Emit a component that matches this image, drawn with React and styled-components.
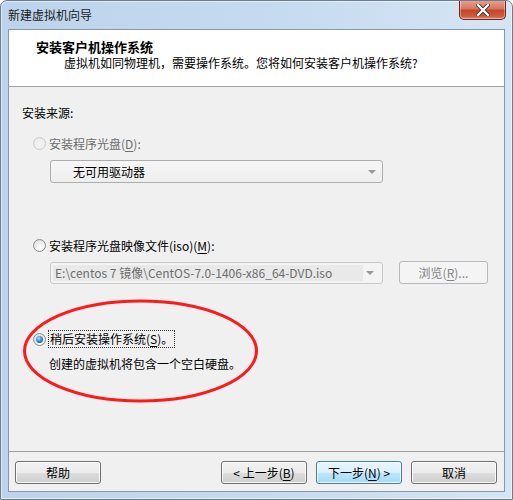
import React from "react";
import styled, { createGlobalStyle } from "styled-components";

const Global = createGlobalStyle`
  html, body { margin: 0; padding: 0; background: #ffffff; }
  body { font-family: "Noto Sans CJK SC", "Noto Sans", sans-serif; font-size: 12px; color: #000; }
  * { box-sizing: border-box; }
`;

const Window = styled.div`
  position: relative;
  width: 513px;
  height: 500px;
  border: 1px solid #6b7d92;
  border-radius: 7px 7px 0 0;
  background: linear-gradient(90deg, #bcd3eb 0%, #c6dbef 55%, #d6e5f4 100%);
  box-shadow: inset 0 0 0 1px rgba(255,255,255,0.55);
  display: flex;
  flex-direction: column;
  overflow: hidden;
`;

const TitleBar = styled.div`
  height: 28px;
  display: flex;
  align-items: center;
  padding: 0 0 0 7px;
  position: relative;
`;

const Title = styled.div`
  font-size: 12px;
  color: #1a1a1a;
  line-height: 16px;
  margin-top: -1px;
`;

const CloseBtn = styled.div`
  position: absolute;
  top: -1px;
  right: 6px;
  width: 47px;
  height: 20px;
  border: 1px solid #6e2a22;
  border-top: none;
  border-radius: 0 0 5px 5px;
  background: linear-gradient(180deg, #e8a493 0%, #d7765f 45%, #c3452c 55%, #cf5b3e 85%, #e08a6b 100%);
  box-shadow: inset 0 0 0 1px rgba(255,255,255,0.35);
  display: flex;
  align-items: center;
  justify-content: center;
`;

const Client = styled.div`
  margin: 0 7px 7px 7px;
  flex: 1;
  border: 1px solid #8597ad;
  background: #f0f0f0;
  display: flex;
  flex-direction: column;
`;

const Header = styled.div`
  height: 57px;
  background: #ffffff;
  border-bottom: 1px solid #a0a0a0;
  padding: 9px 0 0 27px;
  display: flex;
  flex-direction: column;
`;

const HeaderTitle = styled.div`
  font-size: 13px;
  font-weight: bold;
  line-height: 16px;
`;

const HeaderSub = styled.div`
  font-size: 12px;
  line-height: 16px;
  padding-left: 28px;
`;

const Body = styled.div`
  flex: 1;
  display: flex;
  flex-direction: column;
  padding: 18px 0 0 13px;
`;

const Label = styled.div`
  line-height: 16px;
  height: 16px;
  margin-top: ${(p) => p.$mt || 0}px;
  padding-left: ${(p) => p.$indent || 0}px;
  color: ${(p) => (p.$disabled ? "#6d6d6d" : "#000")};
`;

const RadioRow = styled.div`
  display: flex;
  align-items: center;
  height: 16px;
  margin-top: ${(p) => p.$mt || 0}px;
  padding-left: 11px;
  color: ${(p) => (p.$disabled ? "#6d6d6d" : "#000")};
`;

const RadioDot = styled.span`
  width: 13px;
  height: 13px;
  border-radius: 50%;
  margin-right: 3px;
  flex: none;
  display: flex;
  align-items: center;
  justify-content: center;
  border: 1px solid ${(p) => (p.$disabled ? "#cbcbcb" : "#8b8c8c")};
  background: ${(p) =>
    p.$disabled
      ? "radial-gradient(circle at 50% 60%, #f5f5f5 0%, #e6e6e6 100%)"
      : "radial-gradient(circle at 60% 70%, #ffffff 0%, #e3e3e3 70%, #cfcfcf 100%)"};
  &::after {
    content: "";
    display: ${(p) => (p.$checked ? "block" : "none")};
    width: 7px;
    height: 7px;
    border-radius: 50%;
    background: radial-gradient(circle at 40% 35%, #b9e4ff 0%, #3a8fd3 45%, #0d4a8c 100%);
  }
`;

const Focus = styled.span`
  outline: 1px dotted #333;
  outline-offset: 0px;
  padding: 0 1px;
  line-height: 16px;
`;

const U = styled.span`
  text-decoration: underline;
  text-underline-offset: 2px;
`;

const Combo = styled.div`
  margin-top: ${(p) => p.$mt || 0}px;
  margin-left: 28px;
  width: 333px;
  height: ${(p) => p.$h || 23}px;
  border: 1px solid ${(p) => (p.$edit ? "#c9c9c9" : "#adadad")};
  border-radius: 3px;
  background: ${(p) => (p.$edit ? "#f4f4f4" : "linear-gradient(180deg, #f6f6f6 0%, #eeeeee 100%)")};
  display: flex;
  align-items: center;
  padding: ${(p) => (p.$edit ? "2px" : "0 0 0 22px")};
`;

const ComboText = styled.div`
  flex: 1;
  line-height: 16px;
  color: #000;
`;

const EditField = styled.div`
  width: 310px;
  height: 100%;
  background: #e9e9e9;
  color: #6d6d6d;
  padding-left: 2px;
  display: flex;
  align-items: center;
  white-space: nowrap;
  overflow: hidden;
`;

const Arrow = styled.div`
  width: 0;
  height: 0;
  margin: 0 6px 0 auto;
  border-left: 4px solid transparent;
  border-right: 4px solid transparent;
  border-top: 4px solid #999999;
`;

const ComboRow = styled.div`
  display: flex;
  align-items: center;
  margin-top: ${(p) => p.$mt || 0}px;
`;

const Footer = styled.div`
  height: 40px;
  border-top: 1px solid #a0a0a0;
  display: flex;
  align-items: flex-start;
  padding: 9px 7px 0 6px;
`;

const Button = styled.div`
  width: ${(p) => p.$w || 86}px;
  height: 23px;
  border-radius: 3px;
  display: flex;
  align-items: center;
  justify-content: center;
  line-height: 16px;
  margin-left: ${(p) => p.$ml || 0}px;
  border: 1px solid ${(p) => (p.$disabled ? "#b5b9bc" : p.$def ? "#3c7fb1" : "#707070")};
  color: ${(p) => (p.$disabled ? "#838383" : "#000")};
  background: ${(p) =>
    p.$disabled
      ? "#f4f4f4"
      : p.$def
      ? "linear-gradient(180deg, #eaf6fd 0%, #d9f0fc 50%, #bee6fd 51%, #a7d9f5 100%)"
      : "linear-gradient(180deg, #f2f2f2 0%, #ebebeb 50%, #dddddd 51%, #cfcfcf 100%)"};
  box-shadow: ${(p) => (p.$disabled ? "none" : "inset 0 0 0 1px rgba(255,255,255,0.85)")};
`;

const Spacer = styled.div`
  flex: 1;
`;

const Overlay = styled.svg`
  position: absolute;
  left: 0;
  top: 0;
  pointer-events: none;
`;

export default function App() {
  return (
    <>
      <Global />
      <Window>
        <TitleBar>
          <Title>新建虚拟机向导</Title>
          <CloseBtn>
            <svg width="14" height="12" viewBox="0 0 14 12">
              <path d="M2 1 L12 11 M12 1 L2 11" stroke="#3a3a3a" strokeWidth="4" strokeLinecap="square" />
              <path d="M2 1 L12 11 M12 1 L2 11" stroke="#ffffff" strokeWidth="2.2" strokeLinecap="square" />
            </svg>
          </CloseBtn>
        </TitleBar>
        <Client>
          <Header>
            <HeaderTitle>安装客户机操作系统</HeaderTitle>
            <HeaderSub>虚拟机如同物理机，需要操作系统。您将如何安装客户机操作系统?</HeaderSub>
          </Header>
          <Body>
            <Label>安装来源:</Label>
            <RadioRow $mt={14} $disabled>
              <RadioDot $disabled />
              <span>安装程序光盘(<U>D</U>):</span>
            </RadioRow>
            <Combo $mt={9}>
              <ComboText>无可用驱动器</ComboText>
              <Arrow />
            </Combo>
            <RadioRow $mt={54}>
              <RadioDot />
              <span>安装程序光盘映像文件(iso)(<U>M</U>):</span>
            </RadioRow>
            <ComboRow $mt={8}>
              <Combo $edit $h={22}>
                <EditField>E:\centos 7 镜像\CentOS-7.0-1406-x86_64-DVD.iso</EditField>
                <Arrow />
              </Combo>
              <Button $disabled $ml={16} $w={89}>浏览(<U>R</U>)...</Button>
            </ComboRow>
            <RadioRow $mt={47}>
              <RadioDot $checked />
              <Focus>稍后安装操作系统(<U>S</U>)。</Focus>
            </RadioRow>
            <Label $mt={9} $indent={27}>创建的虚拟机将包含一个空白硬盘。</Label>
          </Body>
          <Footer>
            <Button>帮助</Button>
            <Spacer />
            <Button>&lt; 上一步(<U>B</U>)</Button>
            <Button $def $ml={9}>下一步(<U>N</U>) &gt;</Button>
            <Button $ml={9}>取消</Button>
          </Footer>
        </Client>
        <Overlay width="513" height="500">
          <ellipse cx="139.5" cy="350" rx="116" ry="50" fill="none" stroke="#ff1a1a" strokeWidth="3" />
        </Overlay>
      </Window>
    </>
  );
}
